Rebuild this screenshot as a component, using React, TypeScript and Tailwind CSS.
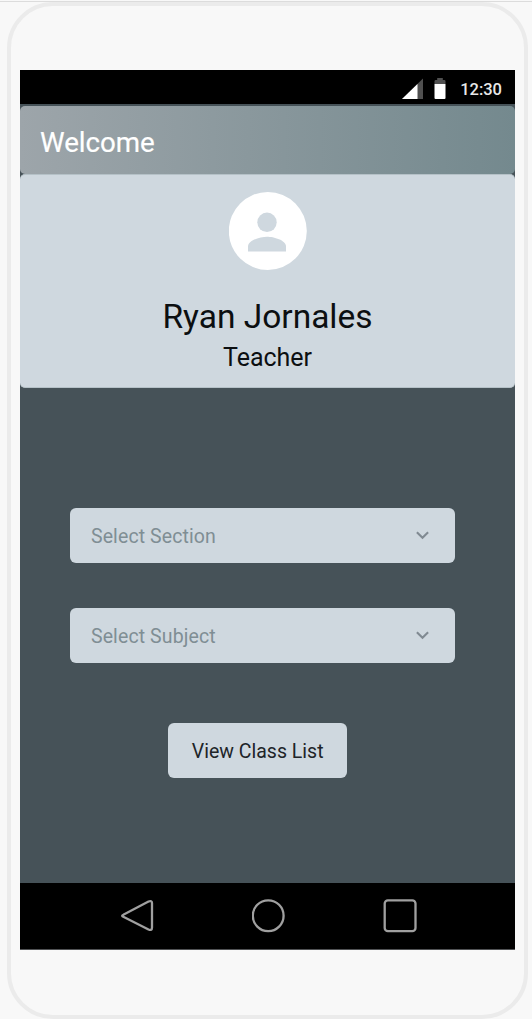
function StatusBar() {
  return (
    <div className="flex h-[34px] items-center justify-end bg-black pr-[13px]">
      <svg width="22" height="22" viewBox="0 0 22 22" className="mt-[3px] mr-[10px]">
        <path d="M21 0.5V21H0Z" fill="#505050" />
        <path d="M15.5 5.9V21H0Z" fill="#fff" />
      </svg>
      <svg width="12" height="22" viewBox="0 0 12 22" className="mt-[3px] mr-[14px]">
        <path d="M0.5 6V3.2Q0.5 2 1.7 2H3.2V0H8.8V2H10.3Q11.5 2 11.5 3.2V6Z" fill="#505050" />
        <path d="M0.5 6H11.5V20Q11.5 21 10.5 21H1.5Q0.5 21 0.5 20Z" fill="#fff" />
      </svg>
      <span className="mt-[6px] text-[16.5px] leading-5 font-medium text-[#e8e8e8]">12:30</span>
    </div>
  );
}

function Profile() {
  return (
    <section className="flex h-[214px] flex-col items-center rounded-[5px] border-y border-[#b5c1c7] bg-[#cfd8df] pt-[17px] text-[#0c0f11]">
      <svg width="78" height="78" viewBox="0 0 78 78">
        <circle cx="38.8" cy="39" r="39" fill="#fff" />
        <circle cx="38" cy="30.3" r="9.7" fill="#cfd8df" />
        <path d="M19 59.5V54.5C19 48 31.5 44.7 38 44.7S57 48 57 54.5V59.5Z" fill="#cfd8df" />
      </svg>
      <h2 className="mt-[27px] text-[33.5px] leading-10">Ryan Jornales</h2>
      <p className="mt-[6px] text-[25px] leading-[30px]">Teacher</p>
    </section>
  );
}

function Select({ label }: { label: string }) {
  return (
    <button className="flex h-[55px] w-[385px] items-center justify-between rounded-[6px] bg-[#cfd8df] pr-[26px] pl-[21px] text-[19.5px] tracking-[0.1px] text-[#7f8e94]">
      <span className="mt-[2px]">{label}</span>
      <svg width="13" height="9" viewBox="0 0 13 9" fill="none" stroke="#808a92" strokeWidth="2.1">
        <path d="M0.9 1.2L6.5 6.8L12.1 1.2" />
      </svg>
    </button>
  );
}

function NavigationBar() {
  return (
    <nav className="flex h-[67px] items-center gap-[97px] border-b border-[#505254] bg-black pl-[101px]">
      <svg width="34" height="34" viewBox="0 0 34 34" fill="none" stroke="#a0a0a0" strokeWidth="2.3" strokeLinejoin="round">
        <path d="M2.3 15.7L27.5 2.5Q31 1.2 31 4V28.5Q31 32 27.5 30.5L2.3 17.8Q0 16.7 2.3 15.7Z" />
      </svg>
      <svg width="34" height="34" viewBox="0 0 34 34" fill="none" stroke="#a0a0a0" strokeWidth="2.3">
        <circle cx="16.2" cy="16.7" r="15.4" />
      </svg>
      <svg width="34" height="34" viewBox="0 0 34 34" fill="none" stroke="#a0a0a0" strokeWidth="2.3">
        <rect x="1.7" y="1.4" width="30.8" height="30.8" rx="3.2" />
      </svg>
    </nav>
  );
}

export default function App() {
  return (
    <div className="h-[1019px] w-[532px] overflow-hidden bg-[#f8f8f8] pt-px font-[Roboto,sans-serif]">
      <div className="border-t border-[#dcdcdc] pl-[7px]">
        <div className="h-[1017px] w-[521px] rounded-[46px] border-4 border-[#ebebeb] bg-[#f8f8f8] pt-[64px] pl-[9px]">
          <div className="flex h-[880px] w-[495px] flex-col bg-[#465258]">
            <StatusBar />
            <header className="mt-[2px] flex h-[68px] items-center rounded-[5px] bg-linear-to-r from-[#9da5aa] to-[#74898e] pl-[20px]">
              <h1 className="mt-[6px] text-[27.7px] leading-8 text-white [-webkit-text-stroke:0.2px_white]">Welcome</h1>
            </header>
            <Profile />
            <main className="flex flex-1 flex-col pt-[120px] pl-[50px]">
              <div className="flex flex-col gap-[45px]">
                <Select label="Select Section" />
                <Select label="Select Subject" />
              </div>
              <button className="mt-[60.4px] ml-[98px] h-[55px] w-[179.4px] rounded-[6px] bg-[#cfd8df] pt-[2px] text-[19.5px] text-[#202428]">
                View Class List
              </button>
            </main>
            <NavigationBar />
          </div>
        </div>
      </div>
    </div>
  );
}
